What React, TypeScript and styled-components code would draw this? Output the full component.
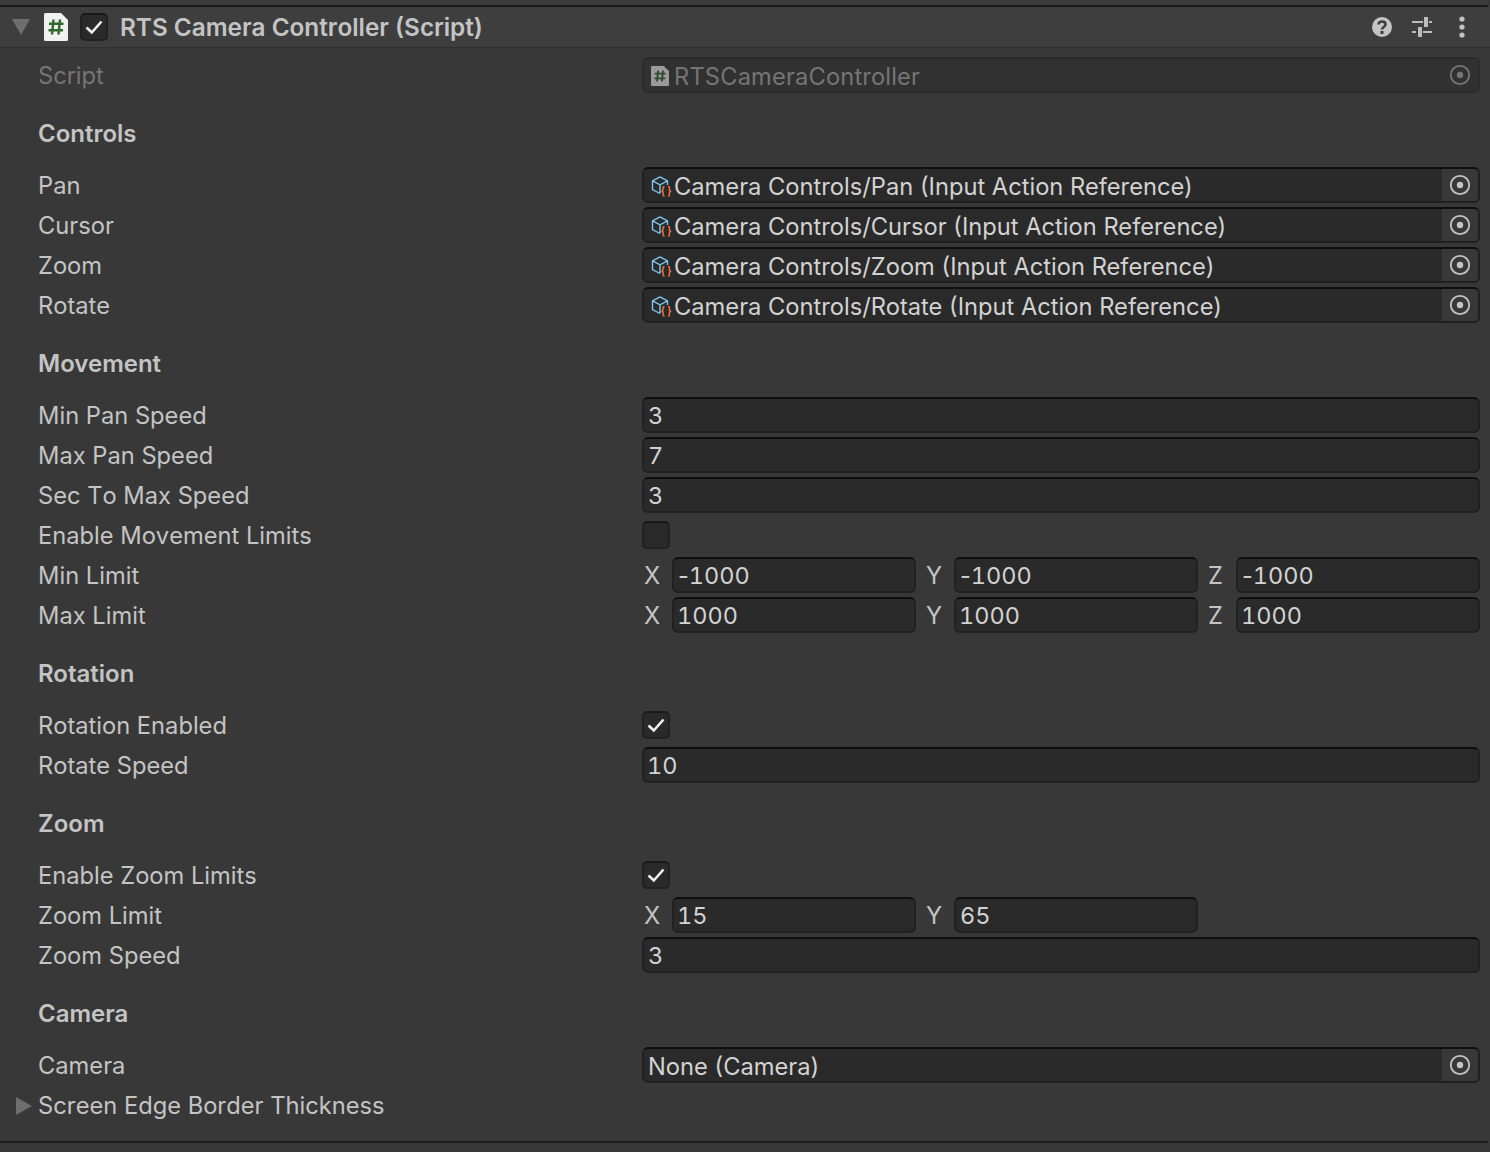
import React from "react";
import styled, { createGlobalStyle } from "styled-components";

const Global = createGlobalStyle`
  html, body { margin: 0; padding: 0; background: #383838; }
  body { font-family: Inter, "Noto Sans", sans-serif; font-kerning: none; }
`;

const Page = styled.div`
  width: 1490px;
  height: 1152px;
  background: #383838;
  overflow: hidden;
  box-sizing: border-box;
`;
const TopStrip = styled.div`
  height: 5px;
  background: #3c3c3c;
  border-bottom: 2px solid #1a1a1a;
  margin-right: 2px;
`;
const Header = styled.div`
  height: 40px;
  background: #3e3e3e;
  border-bottom: 1px solid #303030;
  display: flex;
  align-items: center;
  padding-left: 12px;
  box-sizing: content-box;
`;
const HeaderTitle = styled.span`
  font-size: 24.3px;
  font-weight: 600;
  color: #c4c4c4;
  margin-left: 12px;
  flex: 1;
  white-space: nowrap;
`;
const HeaderActions = styled.div`
  display: flex;
  align-items: center;
  gap: 16px;
  margin-right: 16px;
`;
const ActionIcon = styled.svg`
  width: 24px;
  height: 24px;
  display: block;
`;
const FoldArrow = styled.svg<{ $mr?: number }>`
  display: block;
  flex: none;
  margin-right: ${(p) => p.$mr ?? 0}px;
`;
const Body = styled.div`
  padding-top: 8px;
`;
const Row = styled.div`
  height: 40px;
  display: grid;
  grid-template-columns: 642px 838px;
  align-items: start;
`;
const Label = styled.div<{ $dim?: boolean }>`
  position: relative;
  height: 40px;
  line-height: 40px;
  padding-left: 38px;
  font-size: 23.7px;
  color: ${(p) => (p.$dim ? "#757575" : "#c4c4c4")};
  white-space: nowrap;
`;
const FoldSlot = styled.span`
  position: absolute;
  left: 16px;
  top: 11px;
`;
const SectionHead = styled.div`
  height: 70px;
  box-sizing: border-box;
  padding: 18px 0 0 38px;
  line-height: 40px;
  font-size: 24px;
  font-weight: 600;
  font-kerning: normal;
  color: #c4c4c4;
`;
const Field = styled.div<{ $dim?: boolean }>`
  height: 36px;
  margin-top: 1px;
  box-sizing: border-box;
  background: ${(p) => (p.$dim ? "#313131" : "#2a2a2a")};
  border: 2px solid ${(p) => (p.$dim ? "#2c2c2c" : "#212121")};
  border-top-color: ${(p) => (p.$dim ? "#292929" : "#0e0e0e")};
  border-radius: 6px;
  display: flex;
  align-items: center;
  padding-left: 4px;
  font-size: 23.7px;
  letter-spacing: ${(p) => (p.$dim ? "0.15px" : "0")};
  color: ${(p) => (p.$dim ? "#757575" : "#d2d2d2")};
  overflow: hidden;
  white-space: nowrap;
`;
const FieldText = styled.span`
  flex: 1;
  line-height: 30px;
  padding-top: 4px;
  font-kerning: normal;
`;
const NumberText = styled.span<{ $lead: number }>`
  flex: 1;
  line-height: 30px;
  padding-top: 2px;
  margin-left: ${(p) => p.$lead}px;
  font-size: 23.5px;
  font-variant-numeric: tabular-nums;
`;
const Minus = styled.span`
  font-variant-numeric: normal;
`;
const PickerBtn = styled.span<{ $dim?: boolean }>`
  flex: none;
  width: 36px;
  height: 32px;
  background: ${(p) => (p.$dim ? "transparent" : "#383838")};
  display: flex;
  align-items: center;
  justify-content: center;
`;
const VectorGrid = styled.div`
  display: grid;
  grid-template-columns: repeat(3, 274px);
  column-gap: 8px;
`;
const Axis = styled.div`
  display: grid;
  grid-template-columns: 30px 1fr;
  align-items: start;
`;
const AxisName = styled.span`
  height: 40px;
  line-height: 40px;
  font-size: 23.7px;
  color: #c4c4c4;
  padding-left: 2px;
`;
const Check = styled.div<{ $mt?: number }>`
  width: 28px;
  height: 28px;
  flex: none;
  box-sizing: border-box;
  margin-top: ${(p) => p.$mt ?? 0}px;
  background: #2a2a2a;
  border: 2px solid #212121;
  border-top-color: #191919;
  border-radius: 5px;
  display: flex;
  align-items: center;
  justify-content: center;
`;
const HeaderCheck = styled(Check)`
  margin-left: 12px;
`;
const BottomRule = styled.div`
  height: 2px;
  margin-top: 15px;
  margin-right: 2px;
  background: #1e1e1e;
`;
const ScriptGlyph = styled.svg`
  flex: none;
  margin: 2px 5px 0 3px;
`;
const HeaderGlyph = styled.svg`
  flex: none;
`;
const CubeGlyph = styled.svg`
  flex: none;
  margin: 3px 2px 0 3px;
`;

const Tick = () => (
  <svg width="18" height="16" viewBox="0 0 18 16" fill="none">
    <path d="M1.500 8.500 L6.800 13.500 L16.500 2.500" stroke="#f0f0f0" strokeWidth="2.600" />
  </svg>
);

const Picker = ({ dim }: { dim?: boolean }) => (
  <svg width="22" height="22" viewBox="0 0 22 22" fill="none">
    <circle cx="11" cy="11" r="9.200" stroke={dim ? "#757575" : "#c4c4c4"} strokeWidth="1.800" />
    <circle cx="11" cy="11" r="3.200" fill={dim ? "#757575" : "#c4c4c4"} />
  </svg>
);

const scriptPaper = "M1.500 0H17L24 7V26.500Q24 28 22.500 28H1.500Q0 28 0 26.500V1.500Q0 0 1.500 0Z";
const scriptHash = "M9.500 6.500 L8 21.500 M16 6.500 L14.500 21.500 M5 10.700H19.500 M4.500 17.300H19";

const Cube = () => (
  <CubeGlyph width="21" height="21" viewBox="0 0 21 21" fill="none">
    <path d="M9 .8 L16.500 4.800 V9 M9 .8 L1.500 4.800 V13.500 L9 17.500 M1.500 4.800 L9 8.800 L16.500 4.800 M9 8.800 V17.500" stroke="#7fc6ee" strokeWidth="1.400" />
    <path d="M13.500 10.500 Q12 10.500 12 12 V14.200 L11 15.300 L12 16.400 V18.500 Q12 20 13.500 20 M17 10.500 Q18.500 10.500 18.500 12 V14.200 L19.500 15.300 L18.500 16.400 V18.500 Q18.500 20 17 20" stroke="#f0703a" strokeWidth="1.500" />
  </CubeGlyph>
);

const Ref = ({ text }: { text: string }) => (
  <Row>
    <Label>{text.split("|")[0]}</Label>
    <Field>
      <Cube />
      <FieldText>{text.split("|")[1]}</FieldText>
      <PickerBtn><Picker /></PickerBtn>
    </Field>
  </Row>
);

const NumberValue = ({ value }: { value: string }) => (
  <NumberText $lead={value.startsWith("1") ? -1 : 0}>
    {value.startsWith("-") ? <><Minus>-</Minus>{value.slice(1)}</> : value}
  </NumberText>
);

const Num = ({ label, value }: { label: string; value: string }) => (
  <Row>
    <Label>{label}</Label>
    <Field><NumberValue value={value} /></Field>
  </Row>
);

const Toggle = ({ label, on }: { label: string; on?: boolean }) => (
  <Row>
    <Label>{label}</Label>
    <Check $mt={5}>{on && <Tick />}</Check>
  </Row>
);

const Vector = ({ label, axes }: { label: string; axes: [string, string][] }) => (
  <Row>
    <Label>{label}</Label>
    <VectorGrid>
      {axes.map(([a, v]) => (
        <Axis key={a}>
          <AxisName>{a}</AxisName>
          <Field><NumberValue value={v} /></Field>
        </Axis>
      ))}
    </VectorGrid>
  </Row>
);

export default function App() {
  return (
    <Page>
      <Global />
      <TopStrip />
      <Header>
        <FoldArrow width="18" height="16" viewBox="0 0 18 16" $mr={14}>
          <path d="M0 0H18L9 16Z" fill="#6e6e6e" />
        </FoldArrow>
        <HeaderGlyph width="24" height="28" viewBox="0 0 24 28">
          <path d={scriptPaper} fill="#f1f1f1" />
          <path d={scriptHash} stroke="#2f6b2f" strokeWidth="2.500" fill="none" />
        </HeaderGlyph>
        <HeaderCheck><Tick /></HeaderCheck>
        <HeaderTitle>RTS Camera Controller (Script)</HeaderTitle>
        <HeaderActions>
          <ActionIcon viewBox="0 0 24 24">
            <circle cx="12" cy="12" r="10" fill="#c4c4c4" />
            <path d="M8.500 9.500 C8.500 5.500 15.500 5.500 15.500 9.500 C15.500 12 12 12 12 14.500" stroke="#3e3e3e" strokeWidth="2.600" fill="none" />
            <rect x="10.500" y="16" width="3" height="3" fill="#3e3e3e" />
          </ActionIcon>
          <ActionIcon viewBox="0 0 24 24">
            <path d="M2 7H13 M19 7H22 M2 17H6 M13 17H22" stroke="#bdbdbd" strokeWidth="2" fill="none" />
            <path d="M16 2V12 M10 12V22" stroke="#bdbdbd" strokeWidth="4" fill="none" />
          </ActionIcon>
          <ActionIcon viewBox="0 0 24 24">
            <circle cx="12" cy="4" r="2.600" fill="#c4c4c4" />
            <circle cx="12" cy="12" r="2.600" fill="#c4c4c4" />
            <circle cx="12" cy="20" r="2.600" fill="#c4c4c4" />
          </ActionIcon>
        </HeaderActions>
      </Header>
      <Body>
        <Row>
          <Label $dim>Script</Label>
          <Field $dim>
            <ScriptGlyph width="18" height="20" viewBox="0 0 24 28" preserveAspectRatio="none">
              <path d={scriptPaper} fill="#9a9a9a" />
              <path d={scriptHash} stroke="#2f4a2f" strokeWidth="2.500" fill="none" />
            </ScriptGlyph>
            <FieldText>RTSCameraController</FieldText>
            <PickerBtn $dim><Picker dim /></PickerBtn>
          </Field>
        </Row>
        <SectionHead>Controls</SectionHead>
        <Ref text="Pan|Camera Controls/Pan (Input Action Reference)" />
        <Ref text="Cursor|Camera Controls/Cursor (Input Action Reference)" />
        <Ref text="Zoom|Camera Controls/Zoom (Input Action Reference)" />
        <Ref text="Rotate|Camera Controls/Rotate (Input Action Reference)" />
        <SectionHead>Movement</SectionHead>
        <Num label="Min Pan Speed" value="3" />
        <Num label="Max Pan Speed" value="7" />
        <Num label="Sec To Max Speed" value="3" />
        <Toggle label="Enable Movement Limits" />
        <Vector label="Min Limit" axes={[["X", "-1000"], ["Y", "-1000"], ["Z", "-1000"]]} />
        <Vector label="Max Limit" axes={[["X", "1000"], ["Y", "1000"], ["Z", "1000"]]} />
        <SectionHead>Rotation</SectionHead>
        <Toggle label="Rotation Enabled" on />
        <Num label="Rotate Speed" value="10" />
        <SectionHead>Zoom</SectionHead>
        <Toggle label="Enable Zoom Limits" on />
        <Vector label="Zoom Limit" axes={[["X", "15"], ["Y", "65"]]} />
        <Num label="Zoom Speed" value="3" />
        <SectionHead>Camera</SectionHead>
        <Row>
          <Label>Camera</Label>
          <Field>
            <FieldText>None (Camera)</FieldText>
            <PickerBtn><Picker /></PickerBtn>
          </Field>
        </Row>
        <Row>
          <Label>
            <FoldSlot>
              <FoldArrow width="16" height="18" viewBox="0 0 16 18">
                <path d="M0 0V18L16 9Z" fill="#6e6e6e" />
              </FoldArrow>
            </FoldSlot>
            Screen Edge Border Thickness
          </Label>
        </Row>
        <BottomRule />
      </Body>
    </Page>
  );
}
